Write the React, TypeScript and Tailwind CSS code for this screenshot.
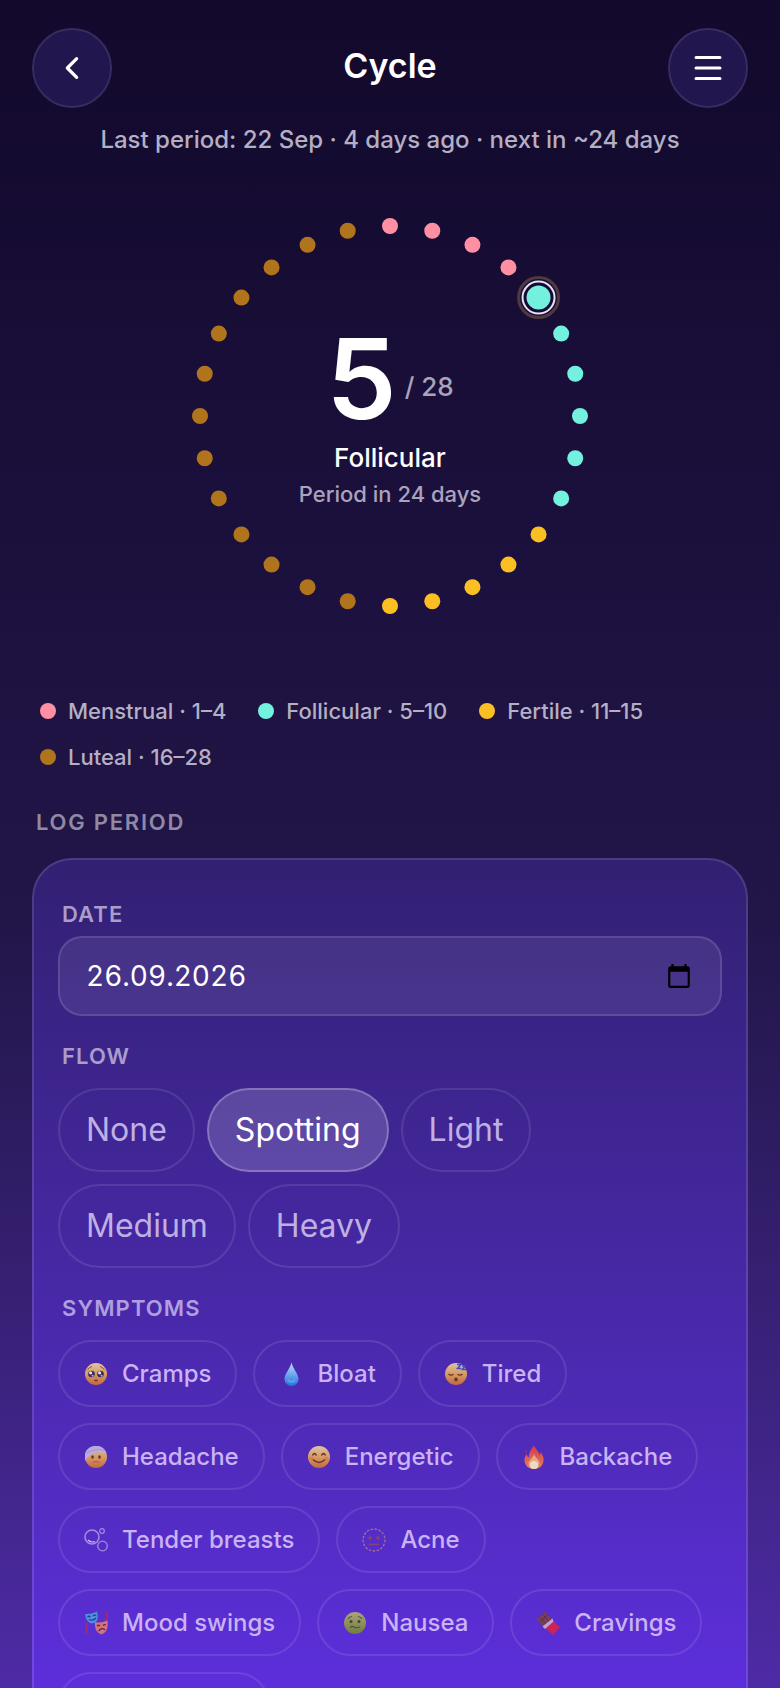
import type { ReactNode } from "react"
import { useState } from "react"

type Phase = "menstrual" | "follicular" | "fertile" | "luteal"

const phaseFill: Record<Phase, string> = {
    menstrual: "fill-[#ff8fa3]",
    follicular: "fill-[#74f0df]",
    fertile: "fill-[#fbbf24]",
    luteal: "fill-[#b0751c]",
}

const legend = [
    { label: "Menstrual · 1–4", dot: "bg-[#ff8fa3]" },
    { label: "Follicular · 5–10", dot: "bg-[#74f0df]" },
    { label: "Fertile · 11–15", dot: "bg-[#fbbf24]" },
    { label: "Luteal · 16–28", dot: "bg-[#b0751c]" },
]

const flows = ["None", "Spotting", "Light", "Medium", "Heavy"]

const phaseOf = (day: number): Phase => {
    if (day <= 4) return "menstrual"
    if (day <= 10) return "follicular"
    if (day <= 15) return "fertile"
    return "luteal"
}

const Face = ({ children, green }: { children: ReactNode; green?: boolean }) => (
    <svg viewBox="0 0 24 24" className="size-6 opacity-85" aria-hidden="true">
        <defs>
            <linearGradient id="face" x1="0" y1="0" x2="0" y2="1">
                <stop offset="0" stopColor="#f6dfa0" />
                <stop offset="0.5" stopColor="#eeb055" />
                <stop offset="1" stopColor="#d9722c" />
            </linearGradient>
            <linearGradient id="sick" x1="0" y1="0" x2="0" y2="1">
                <stop offset="0" stopColor="#bcb86a" />
                <stop offset="1" stopColor="#738c22" />
            </linearGradient>
        </defs>
        <circle cx="12" cy="12" r="11" fill={green ? "url(#sick)" : "url(#face)"} />
        {children}
    </svg>
)

const icons: Record<string, ReactNode> = {
    Cramps: (
        <Face>
            <path d="M3.500 8 Q5 5 8 4.500 M16 4.500 Q19 5 20.500 8" stroke="#a2602a" strokeWidth="1" fill="none" />
            <circle cx="7.500" cy="12" r="3.300" fill="#3a2848" />
            <circle cx="16.500" cy="12" r="3.300" fill="#3a2848" />
            <circle cx="6.600" cy="10.800" r="1.600" fill="#fff" />
            <circle cx="15.600" cy="10.800" r="1.600" fill="#fff" />
            <circle cx="8.600" cy="13.700" r="1" fill="#c9c4ff" />
            <circle cx="17.600" cy="13.700" r="1" fill="#c9c4ff" />
            <path d="M10.500 19 Q12 17.500 13.500 19" stroke="#6b3416" strokeWidth="1.400" fill="none" />
        </Face>
    ),
    Bloat: (
        <svg viewBox="0 0 24 24" className="size-6 opacity-90" aria-hidden="true">
            <defs>
                <linearGradient id="drop" x1="0" y1="0" x2="0" y2="1">
                    <stop offset="0" stopColor="#d9f0ff" />
                    <stop offset="0.45" stopColor="#7cbcf5" />
                    <stop offset="1" stopColor="#1c7ce6" />
                </linearGradient>
            </defs>
            <path d="M12.500 0.500 C13.500 6 19.500 12 19.500 17 A7 7 0 0 1 5.500 17 C5.500 12 11.500 6 12.500 0.500 Z" fill="url(#drop)" />
            <path d="M9 18 Q12.500 22 16 18" stroke="#b8e2ff" strokeWidth="1.500" fill="none" opacity="0.4" />
        </svg>
    ),
    Tired: (
        <Face>
            <path d="M4.500 12 Q7 14 9.500 12.200 M13.500 12.200 Q16 14 18.500 12" stroke="#6b3416" strokeWidth="1.300" fill="none" />
            <ellipse cx="12" cy="17.500" rx="1.700" ry="2" fill="#6b3416" />
            <path d="M13 2.500 H17 L13.500 6.500 H17.500 M18 4 H21 L18.500 7.500 H22" stroke="#4453c9" strokeWidth="1.500" fill="none" />
        </Face>
    ),
    Headache: (
        <Face>
            <path d="M1 11 C0.500 5 6 1 12 1 C17 1 21 3.500 22.500 8 C15 6 6 7.500 1 16 Z" fill="#cdc0e6" />
            <path d="M2 8.500 C8 4.500 15 3.500 21 5.500" stroke="#b2a5d4" strokeWidth="0.900" fill="none" />
            <ellipse cx="8.500" cy="12" rx="1.300" ry="1.800" fill="#6b3416" />
            <ellipse cx="15.500" cy="12" rx="1.300" ry="1.800" fill="#6b3416" />
            <path d="M8.500 17.500 Q12 15.500 15.500 17.500" stroke="#c65e4b" strokeWidth="1.200" fill="none" />
        </Face>
    ),
    Energetic: (
        <Face>
            <path d="M5.500 10.500 Q7.500 6.500 9.500 10.500 M14.500 10.500 Q16.500 6.500 18.500 10.500 M6 14.500 Q12 20.500 18 14.500" stroke="#6b3416" strokeWidth="1.500" fill="none" />
            <circle cx="4.500" cy="13.500" r="2" fill="#ee7350" opacity="0.5" />
            <circle cx="19.500" cy="13.500" r="2" fill="#ee7350" opacity="0.5" />
        </Face>
    ),
    Backache: (
        <svg viewBox="0 0 24 24" className="size-6 opacity-90" aria-hidden="true">
            <defs>
                <linearGradient id="flame" x1="0" y1="0" x2="0" y2="1">
                    <stop offset="0" stopColor="#e0384a" />
                    <stop offset="1" stopColor="#f58a4c" />
                </linearGradient>
            </defs>
            <path d="M12 0 C13 4 17 6 17.500 10 C18.500 9 18.500 7.500 18.500 7 C21 10 22 13 21.500 16 C21 21 17 24 12 24 C7 24 3 21 2.500 16 C2 13 3.500 11 4.500 9 C5 11 6 12 7 12 C6.500 7 10 4 12 0 Z" fill="url(#flame)" />
            <path d="M4 5 Q5.500 6.500 4 8 Q3 6.500 4 5" fill="#e0384a" />
            <path d="M12 9 C13 13 17 14 17.500 18 C17.500 22 15 24 12 24 C9 24 6.500 22 6.500 18.500 C7 15 11 13 12 9 Z" fill="#f8b774" />
            <ellipse cx="12" cy="20" rx="4" ry="4" fill="#ffeccd" />
        </svg>
    ),
    "Tender breasts": (
        <svg viewBox="0 0 24 24" className="size-6" fill="none" stroke="#a58ae0" aria-hidden="true">
            <circle cx="8" cy="9" r="7" strokeWidth="1.600" />
            <circle cx="18.500" cy="18" r="4.800" strokeWidth="1.300" />
            <circle cx="18" cy="3" r="2.300" strokeWidth="1.200" />
            <path d="M4 12 Q7 15 11 13.500" stroke="#cbb8fa" strokeWidth="1.200" />
        </svg>
    ),
    Acne: (
        <svg viewBox="0 0 24 24" className="size-6" fill="none" stroke="#a3709c" aria-hidden="true">
            <circle cx="12" cy="12" r="11" strokeWidth="1.300" strokeDasharray="2.500 1.500" />
            <path d="M8 7.500 V12.500 M6 10 H10 M16 7.500 V12.500 M14 10 H18" stroke="#85407a" strokeWidth="1.500" />
            <path d="M6.500 16.500 H17.500" stroke="#85407a" strokeWidth="1.800" />
        </svg>
    ),
    "Mood swings": (
        <svg viewBox="0 0 24 24" className="size-6 opacity-90" aria-hidden="true">
            <path d="M2 12 Q4 16 1.500 23 M22 1 Q24 6 21 11" stroke="#a82b62" strokeWidth="2.200" fill="none" />
            <path d="M1 3 Q7 3.500 13 0.500 Q16 11 8.500 12.500 Q2 12 1 3 Z" fill="#4b9be0" />
            <path d="M3.500 6 Q5 4.500 6.500 6 M9 5 Q10.500 3.500 12 4.500 M5 8.500 Q9 10.500 12 7" stroke="#1f3f8a" strokeWidth="1.200" fill="none" />
            <path d="M11 11 Q17 12.500 23.500 9.500 Q25 21 17.500 23.500 Q10 21 11 11 Z" fill="#dd7d74" />
            <path d="M13 15 Q14.500 13.500 16 15 M19 14.500 Q20.500 13 22 14 M14.500 20 Q18 16 21 19" stroke="#702338" strokeWidth="1.300" fill="none" />
        </svg>
    ),
    Nausea: (
        <Face green>
            <path d="M5 8 Q6.500 5.500 9 5.500 M15 5.500 Q17.500 5.500 19 8 M7 16.500 Q9 14.500 11 16 T17 16" stroke="#4f5a20" strokeWidth="1.200" fill="none" />
            <circle cx="8" cy="10.500" r="1.500" fill="#3d4a1b" />
            <circle cx="16" cy="10.500" r="1.500" fill="#3d4a1b" />
        </Face>
    ),
    Cravings: (
        <svg viewBox="0 0 24 24" className="size-6 opacity-90" aria-hidden="true">
            <path d="M0.500 8 L9 0.500 L16 8 L7 16 Z" fill="#7d4152" />
            <path d="M3.500 11 L12 3.500 M3 5.500 L10 13 M6 3 L13 10.500" stroke="#5c2c3f" strokeWidth="0.900" />
            <path d="M16 9.500 L24 16 L17 24 L9 16.500 Z" fill="#d8244f" />
            <path d="M16.500 7.500 L17.500 10.500 L9 18 L6.500 15.500 Z" fill="#c8b3cf" />
        </svg>
    ),
    "Poor sleep": (
        <svg viewBox="0 0 24 24" className="size-6" aria-hidden="true">
            <path d="M16 2 A11 11 0 1 0 22 16 A10 10 0 0 1 16 2 Z" fill="#f3c35a" />
        </svg>
    ),
}

const CycleRing = ({ day, length }: { day: number; length: number }) => (
    <svg viewBox="0 0 440 440" className="col-start-1 row-start-1 size-110" aria-hidden="true">
        {Array.from({ length }, (_, i) => {
            const angle = (i / length) * Math.PI * 2
            const x = 220 + 190 * Math.sin(angle)
            const y = 220 - 190 * Math.cos(angle)
            const current = i + 1 === day
            return (
                <g key={i}>
                    {current && <circle cx={x} cy={y} r="20" className="fill-none stroke-[#50393f]" strokeWidth="3" />}
                    {current && <circle cx={x} cy={y} r="16" className="fill-[#120b33] stroke-[#e6e0f5]" strokeWidth="2" />}
                    <circle cx={x} cy={y} r={current ? 12 : 8} className={phaseFill[phaseOf(i + 1)]} />
                </g>
            )
        })}
    </svg>
)

const App = () => {
    const [flow, setFlow] = useState("Spotting")
    const [picked, setPicked] = useState<string[]>([])
    const [date, setDate] = useState("26.09.2026")

    const toggle = (name: string) =>
        setPicked(picked.includes(name) ? picked.filter((p) => p !== name) : [...picked, name])

    return (
        <div className="h-screen overflow-hidden bg-linear-to-b from-[#12092c] via-[#221649] via-55% to-[#4e2ba6] px-8 pt-7 font-['Inter','Liberation_Sans',sans-serif] text-white">
            <header className="flex items-center justify-between">
                <button aria-label="Back" className="flex size-20 items-center justify-center rounded-full border-2 border-[#392b60] bg-[#22164f]">
                    <svg viewBox="0 0 24 24" className="size-8" fill="none" stroke="currentColor" strokeWidth="2.4" strokeLinecap="round" strokeLinejoin="round">
                        <path d="M15.500 5 L8.500 12 L15.500 19" />
                    </svg>
                </button>
                <h1 className="pb-1 text-[34px] leading-10 font-semibold">Cycle</h1>
                <button aria-label="Menu" className="flex size-20 items-center justify-center rounded-full border-2 border-[#392b60] bg-[#22164f]">
                    <svg viewBox="0 0 32 32" className="size-8" fill="none" stroke="currentColor" strokeWidth="3" strokeLinecap="round">
                        <path d="M4 5.500 H28 M4 16 H28 M4 26.500 H28" />
                    </svg>
                </button>
            </header>

            <p className="mt-4 text-center text-[24px] leading-8 font-medium text-[#b5afc4]">
                Last period: 22 Sep · 4 days ago · next in ~24 days
            </p>

            <section className="mt-10 grid place-items-center">
                <CycleRing day={5} length={28} />
                <div className="col-start-1 row-start-1 flex flex-col items-center pt-0.5">
                    <p className="flex items-center gap-2">
                        <span className="text-[112px] leading-28 font-semibold">5</span>
                        <span className="pt-[18px] text-[26px] leading-9 font-medium text-[#aaa3bb]">/ 28</span>
                    </p>
                    <p className="mt-1.5 text-[26px] leading-9 font-medium">Follicular</p>
                    <p className="text-[22px] leading-9 font-medium text-[#aaa3bb]">Period in 24 days</p>
                </div>
            </section>

            <ul className="mt-15 flex flex-wrap gap-x-8 gap-y-4 px-2">
                {legend.map((item) => (
                    <li key={item.label} className="flex items-center gap-3 text-[22px] leading-[30px] font-medium text-[#b5afc4]">
                        <span className={`size-4 rounded-full ${item.dot}`} />
                        {item.label}
                    </li>
                ))}
            </ul>

            <h2 className="mt-[34px] px-1 text-[22px] leading-8 font-semibold tracking-[0.08em] text-[#9089a5]">LOG PERIOD</h2>

            <section className="mt-5 rounded-[40px] border-2 border-white/12 bg-linear-to-b from-[#322072] to-[#6230e8] bg-origin-border px-6 pt-[38px] pb-12">
                <label htmlFor="date" className="block px-1 text-[22px] leading-8 font-semibold tracking-wider text-[#aa9dcb]">DATE</label>
                <div className="mt-1.5 flex h-20 items-center justify-between rounded-3xl border-2 border-white/12 bg-white/8 pr-7 pl-[26px]">
                    <input id="date" value={date} onChange={(e) => setDate(e.target.value)} className="min-w-0 flex-1 bg-transparent text-[28px] tabular-nums outline-none" />
                    <button aria-label="Open calendar" className="text-black">
                        <svg viewBox="0 0 24 24" className="size-[26px]" fill="currentColor">
                            <path d="M20 3h-1V1h-2v2H7V1H5v2H4c-1.100 0-2 .9-2 2v16c0 1.100.9 2 2 2h16c1.100 0 2-.9 2-2V5c0-1.100-.9-2-2-2zm0 18H4V8h16v13z" />
                        </svg>
                    </button>
                </div>

                <h3 className="mt-6 px-1 text-[22px] leading-8 font-semibold tracking-wider text-[#aa9dcb]">FLOW</h3>
                <div className="mt-4 flex flex-wrap gap-3 pr-4">
                    {flows.map((name) => (
                        <button
                            key={name}
                            aria-pressed={flow === name}
                            onClick={() => setFlow(name)}
                            className={`h-21 rounded-full border-2 px-[26px] text-[32px] ${flow === name ? "border-white/25 bg-white/16 text-white" : "border-white/10 text-[#bfb0e4]"}`}
                        >
                            {name}
                        </button>
                    ))}
                </div>

                <h3 className="mt-6 px-1 text-[22px] leading-8 font-semibold tracking-wider text-[#b09fe0]">SYMPTOMS</h3>
                <div className="mt-4 flex flex-wrap gap-4">
                    {Object.keys(icons).map((name) => (
                        <button
                            key={name}
                            aria-pressed={picked.includes(name)}
                            onClick={() => toggle(name)}
                            className={`flex h-[67px] items-center gap-3.5 rounded-full border-2 px-6 text-[24px] font-medium ${picked.includes(name) ? "border-white/25 bg-white/16 text-white" : "border-white/10 text-[#c9b3f5]"}`}
                        >
                            {icons[name]}
                            {name}
                        </button>
                    ))}
                </div>
            </section>
        </div>
    )
}

export default App
